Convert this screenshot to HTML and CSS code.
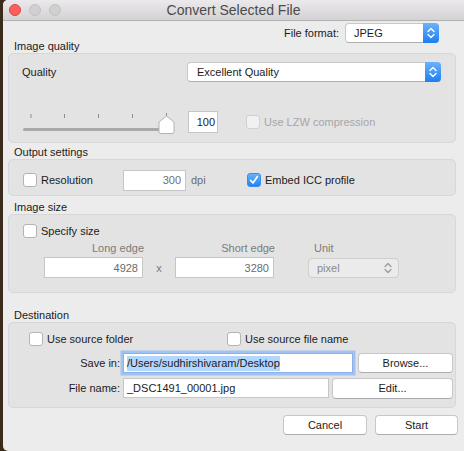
FILE: index.html
```html
<!DOCTYPE html>
<html>
<head>
<meta charset="utf-8">
<link rel="stylesheet" href="styles.css">
</head>
<body>
<div class="window">
  <div class="titlebar">
    <div class="lights"><span class="light red"></span><span class="light"></span><span class="light"></span></div>
    <div class="title">Convert Selected File</div>
    <div></div>
  </div>
  <div class="content">
    <div class="format-row">
      <span class="lbl">File format:</span>
      <div class="popup popup-format"><span class="ptext">JPEG</span><span class="stepper"><svg width="16" height="20" viewBox="0 0 16 20"><path d="M5 8.5 L8 5.5 L11 8.5 M5 11.5 L8 14.5 L11 11.5" fill="none" stroke="#fff" stroke-width="1.4" stroke-linecap="round" stroke-linejoin="round"/></svg></span></div>
    </div>

    <div class="glabel gl-first">Image quality</div>
    <div class="group g-quality">
      <div class="q-row1">
        <span>Quality</span>
        <div class="popup popup-quality"><span class="ptext">Excellent Quality</span><span class="stepper"><svg width="16" height="20" viewBox="0 0 16 20"><path d="M5 8.5 L8 5.5 L11 8.5 M5 11.5 L8 14.5 L11 11.5" fill="none" stroke="#fff" stroke-width="1.4" stroke-linecap="round" stroke-linejoin="round"/></svg></span></div>
      </div>
      <div class="q-row2">
        <svg class="slider" width="153" height="24" viewBox="0 0 153 24">
          <g stroke="#8d8d8d" stroke-width="1">
            <line x1="9" y1="4" x2="9" y2="8"/>
            <line x1="42.5" y1="4" x2="42.5" y2="8"/>
            <line x1="76.5" y1="4" x2="76.5" y2="8"/>
            <line x1="110.5" y1="4" x2="110.5" y2="8"/>
            <line x1="144.5" y1="3" x2="144.5" y2="7"/>
          </g>
          <rect x="1" y="18" width="144" height="3" rx="1.5" fill="#a9a9a9"/>
          <path d="M144.5 6 L152 12 L152 21.5 Q152 23.5 150 23.5 L139 23.5 Q137 23.5 137 21.5 L137 12 Z" fill="#fff" stroke="#b3b3b3" stroke-width="1"/>
        </svg>
        <div class="field num">100</div>
        <label class="check dis"><span class="cb"></span><span>Use LZW compression</span></label>
      </div>
    </div>

    <div class="glabel gl-output">Output settings</div>
    <div class="group g-output">
      <label class="check res-check"><span class="cb"></span><span>Resolution</span></label>
      <div class="field res-field">300</div>
      <span class="dpi">dpi</span>
      <label class="check"><span class="cb on"><svg width="12" height="12" viewBox="0 0 12 12"><path d="M2.6 6.4 L5 9 L9.4 2.6" fill="none" stroke="#fff" stroke-width="1.7" stroke-linecap="round" stroke-linejoin="round"/></svg></span><span>Embed ICC profile</span></label>
    </div>

    <div class="glabel gl-size">Image size</div>
    <div class="group g-size">
      <label class="check"><span class="cb"></span><span>Specify size</span></label>
      <div class="size-grid size-labels">
        <span class="sl-right">Long edge</span>
        <span></span>
        <span class="sl-right">Short edge</span>
        <span></span>
        <span class="sl-unit">Unit</span>
      </div>
      <div class="size-grid size-fields">
        <div class="field dim">4928</div>
        <span class="times">x</span>
        <div class="field dim">3280</div>
        <span></span>
        <div class="popup popup-unit"><span class="ptext">pixel</span><svg width="16" height="18" viewBox="0 0 16 18"><path d="M5 7.5 L8 4.5 L11 7.5 M5 10.5 L8 13.5 L11 10.5" fill="none" stroke="#9a9a9a" stroke-width="1.2" stroke-linecap="round" stroke-linejoin="round"/></svg></div>
      </div>
    </div>

    <div class="glabel gl-dest">Destination</div>
    <div class="group g-dest">
      <div class="dest-checks">
        <label class="check src-folder"><span class="cb"></span><span>Use source folder</span></label>
        <label class="check"><span class="cb"></span><span>Use source file name</span></label>
      </div>
      <div class="dest-row save-row">
        <span class="dlabel">Save in:</span>
        <div class="field path focus"><span class="sel">/Users/sudhirshivaram/Desktop</span></div>
        <button class="btn browse">Browse...</button>
      </div>
      <div class="dest-row name-row">
        <span class="dlabel">File name:</span>
        <div class="field fname">_DSC1491_00001.jpg</div>
        <button class="btn edit">Edit...</button>
      </div>
    </div>

    <div class="actions">
      <button class="btn cancel">Cancel</button>
      <button class="btn start">Start</button>
    </div>
  </div>
</div>
</body>
</html>
```

FILE: styles.css
```css
* { box-sizing: border-box; }
html, body { margin: 0; padding: 0; }
body {
  width: 464px;
  height: 451px;
  overflow: hidden;
  background: #3a2b1b;
  font-family: "Liberation Sans", Arial, sans-serif;
  font-size: 11px;
  color: #1b1b1b;
}
.window {
  margin-left: 3px;
  width: 461px;
  height: 451px;
  background: #ececec;
  border-radius: 5px 0 0 5px;
  overflow: hidden;
}
.titlebar {
  height: 21px;
  display: grid;
  grid-template-columns: 1fr auto 1fr;
  align-items: center;
  background: linear-gradient(#ebe9eb, #d4d2d4);
  border-bottom: 1px solid #b2b2b2;
}
.lights { display: flex; gap: 8px; padding-left: 6px; }
.light {
  width: 12px; height: 12px; border-radius: 50%;
  background: #d0d0d0; border: 1px solid #c0c0c0;
}
.light.red { background: #fc605c; border-color: #e0443f; }
.title { font-size: 14px; color: #4b4b4b; }

.content { padding: 0 8px 0 5px; }

.format-row {
  margin-top: 2px;
  height: 20px;
  display: flex;
  justify-content: flex-end;
  align-items: center;
  padding-right: 17px;
}
.format-row .lbl { margin-right: 6px; }

.popup {
  display: flex;
  align-items: center;
  height: 20px;
  background: #fff;
  border: 1px solid #c8c8c8;
  border-bottom-color: #b0b0b0;
  border-radius: 4px;
}
.popup .ptext { flex: 1; }
.stepper {
  width: 16px;
  height: 20px;
  margin: -1px -1px -1px 0;
  border-radius: 0 4px 4px 0;
  background: linear-gradient(#6bb3fb, #1b7ef3);
  display: flex;
}
.popup-format { width: 94px; padding-left: 8px; }
.popup-quality { width: 254px; margin-left: auto; padding-left: 9px; }

.glabel { height: 14px; line-height: 14px; padding-left: 6px; }
.gl-first { margin-top: -4px; }
.gl-output { margin-top: 2px; }
.gl-size { margin-top: 4px; }
.gl-dest { margin-top: 15px; }

.group {
  background: #e3e3e3;
  border: 1px solid #d7d7d7;
  border-radius: 5px;
}

.g-quality { height: 90px; padding: 8px 14px 0 13px; }
.q-row1 { height: 20px; display: flex; align-items: center; }
.q-row2 { margin-top: 28px; height: 24px; display: flex; align-items: center; }
.slider { display: block; flex: none; }

.field {
  background: #fff;
  border: 1px solid #c6c6c6;
  display: flex;
  align-items: center;
}
.num { width: 30px; height: 22px; margin-left: 13px; justify-content: flex-end; padding-right: 2px; }

.check { display: flex; align-items: center; }
.check .cb { margin-right: 4px; }
.cb {
  width: 14px; height: 14px; flex: none;
  border: 1px solid #b4b4b4;
  border-radius: 3px;
  background: #fff;
  display: flex; align-items: center; justify-content: center;
}
.cb.on { background: linear-gradient(#68b2fb, #2083f4); border-color: #3c8cf0; }
.check.dis { margin-left: 28px; color: #a6a6a6; }
.check.dis .cb { background: #f1f1f1; border-color: #d0d0d0; }

.g-output { height: 37px; padding: 5px 0 0 14px; display: flex; align-items: center; align-content: flex-start; }
.g-output > * { height: 21px; }
.res-check { width: 100px; }
.res-field { width: 63px; height: 21px; justify-content: flex-end; padding-right: 4px; color: #707070; }
.dpi { width: 61px; padding-left: 5px; line-height: 21px; color: #6d6d6d; }

.g-size { height: 79px; padding: 9px 0 0 14px; }
.g-size > .check { height: 14px; }
.size-grid {
  display: grid;
  grid-template-columns: 99px 32px 99px 34px 91px;
  margin-left: 21px;
}
.size-labels { margin-top: 3px; height: 14px; line-height: 14px; color: #7b7b7b; }
.sl-right { text-align: right; margin-right: -1px; }
.sl-unit { padding-left: 6px; }
.size-fields { margin-top: 2px; height: 21px; align-items: center; }
.dim { height: 21px; justify-content: flex-end; padding-right: 4px; color: #6b6b6b; }
.times { text-align: center; color: #7a7a7a; }
.popup-unit {
  background: #ebebeb;
  border-color: #cfcfcf;
  color: #8a8a8a;
  padding-left: 8px;
  padding-right: 2px;
}

.g-dest { height: 86px; padding: 9px 0 0 20px; }
.dest-checks { height: 14px; display: flex; }
.src-folder { width: 198px; }
.dest-row { display: flex; align-items: center; height: 20px; }
.save-row { margin-top: 7px; }
.name-row { margin-top: 5px; }
.dlabel { width: 91px; text-align: right; margin-right: 3px; }
.path { width: 230px; height: 20px; padding-left: 3px; border-color: #8cb1e6; box-shadow: 0 0 0 2.5px #9ec3f4; }
.sel { background: #b3d6fe; line-height: 15px; }
.fname { width: 206px; height: 20px; padding-left: 3px; }

.btn {
  font-family: inherit;
  font-size: 11px;
  color: #1b1b1b;
  height: 20px;
  background: #fff;
  border: 1px solid #c7c7c7;
  border-bottom-color: #adadad;
  border-radius: 4px;
  padding: 0;
}
.browse { width: 95px; margin-left: 5px; }
.edit { width: 121px; margin-left: 3px; height: 21px; }

.actions { margin-top: 7px; display: flex; justify-content: flex-end; margin-right: -2px; }
.cancel { width: 84px; }
.start { width: 83px; margin-left: 8px; }
```
